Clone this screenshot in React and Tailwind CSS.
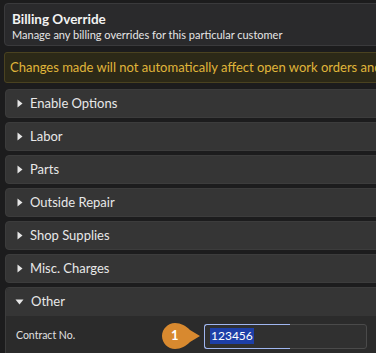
import React from "react"

const sections = ["Enable Options", "Labor", "Parts", "Outside Repair", "Shop Supplies", "Misc. Charges"]

const Caret = ({ open }) =>
  open ? (
    <svg width="9" height="6" viewBox="0 0 9 6" className="shrink-0">
      <path d="M0.5 0.5 L8.5 0.5 L4.5 5.5 Z" fill="#e6e6e6" />
    </svg>
  ) : (
    <svg width="6" height="9" viewBox="0 0 6 9" className="shrink-0">
      <path d="M0.5 0.5 L5.5 4.5 L0.5 8.5 Z" fill="#e6e6e6" />
    </svg>
  )

const App = () => {
  return (
    <div
      className="w-[376px] h-[353px] overflow-hidden bg-[#1c1c1d]"
      style={{ fontFamily: "Lato, 'Open Sans', sans-serif" }}
    >
      <div className="w-[520px] pl-[4px] pt-[3px] flex flex-col gap-[6px]">
        {/* Header */}
        <div className="h-[43px] rounded-[4px] border border-[#3a3a3c] bg-[#2a2a2c] px-[7px] pt-[7px]">
          <div className="text-[13.5px] font-bold leading-[17px] text-[#f2f2f2]">Billing Override</div>
          <div className="text-[11px] leading-[14px] text-[#e6e6e6]">Manage any billing overrides for this particular customer</div>
        </div>

        {/* Warning */}
        <div className="h-[31px] rounded-[3px] border border-[#4a4220] bg-[#2c2917] px-[5px] flex items-center">
          <span className="text-[13px] text-[#e0b63a] whitespace-nowrap">
            Changes made will not automatically affect open work orders and
          </span>
        </div>

        {/* Accordion */}
        <div className="flex flex-col gap-[4px] pl-[1px]">
          {sections.map((s) => (
            <div
              key={s}
              className="h-[29px] rounded-[4px] border border-[#3c3c3c] bg-[#353535] pl-[11px] flex items-center gap-[7px]"
            >
              <Caret />
              <span className="text-[13px] text-[#e8e8e8]">{s}</span>
            </div>
          ))}

          <div className="rounded-t-[4px] border border-[#3c3c3c] bg-[#2b2b2b]">
            <div className="h-[28px] bg-[#353535] pl-[9px] flex items-center gap-[7px] rounded-t-[4px]">
              <Caret open />
              <span className="text-[13px] text-[#e8e8e8]">Other</span>
            </div>
            <div className="h-[40px] pl-[10px] flex items-center">
              <span className="w-[145px] text-[10.5px] text-[#e0e0e0]">Contract No.</span>
              {/* Callout badge */}
              <div className="relative w-[43px] h-[28px]">
                <svg width="43" height="28" viewBox="0 0 43 28" className="absolute left-0 top-0">
                  <path
                    d="M14 1 C20 1 25 4 29 8 L39 14 L29 20 C25 24 20 27 14 27 C7 27 1 21 1 14 C1 7 7 1 14 1 Z"
                    fill="#d8892f"
                  />
                </svg>
                <span className="absolute left-[10px] top-[5px] text-[13px] leading-[17px] font-bold text-white">1</span>
              </div>
              <div className="w-[163px] h-[25px] rounded-[3px] border border-[#4a4a4a] bg-[#303030] relative">
                <div className="absolute left-[-1px] top-[-1px] w-[86px] h-[25px] rounded-l-[3px] border-y border-l border-[#9fb6f0]" />
                <div className="h-full pl-[5px] flex items-center">
                  <span className="bg-[#1d3fa8] text-white text-[12px] leading-[16px] px-[1px]">123456</span>
                </div>
              </div>
            </div>
          </div>
        </div>
      </div>
    </div>
  )
}

export default App
